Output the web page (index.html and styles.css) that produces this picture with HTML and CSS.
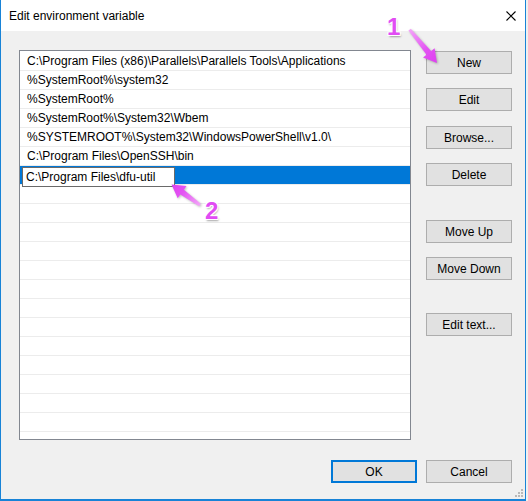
FILE: index.html
```html
<!DOCTYPE html>
<html lang="en">
<head>
    <meta charset="UTF-8">
    <title>Edit environment variable</title>
    <link rel="stylesheet" href="styles.css">
</head>
<body>
    <div class="window">
        <div class="titlebar">
            <span class="title">Edit environment variable</span>
            <svg class="close" width="10" height="10" viewBox="0 0 10 10">
                <path d="M0.5 0.5 L9.5 9.5 M9.5 0.5 L0.5 9.5" stroke="#000" stroke-width="1.1" fill="none"/>
            </svg>
        </div>

        <div class="content">
            <div class="main">
                <div class="list">
                    <div class="row">C:\Program Files (x86)\Parallels\Parallels Tools\Applications</div>
                    <div class="row">%SystemRoot%\system32</div>
                    <div class="row">%SystemRoot%</div>
                    <div class="row">%SystemRoot%\System32\Wbem</div>
                    <div class="row">%SYSTEMROOT%\System32\WindowsPowerShell\v1.0\</div>
                    <div class="row">C:\Program Files\OpenSSH\bin</div>
                    <div class="row selected"><span class="edit-box">C:\Program Files\dfu-util</span></div>
                    <div class="row"></div>
                    <div class="row"></div>
                    <div class="row"></div>
                    <div class="row"></div>
                    <div class="row"></div>
                    <div class="row"></div>
                    <div class="row"></div>
                    <div class="row"></div>
                    <div class="row"></div>
                    <div class="row"></div>
                    <div class="row"></div>
                    <div class="row"></div>
                    <div class="row"></div>
                    <div class="row"></div>
                </div>

                <div class="side-buttons">
                    <button class="btn">New</button>
                    <button class="btn">Edit</button>
                    <button class="btn">Browse...</button>
                    <button class="btn">Delete</button>
                    <button class="btn group-start">Move Up</button>
                    <button class="btn">Move Down</button>
                    <button class="btn group-start">Edit text...</button>
                </div>
            </div>

            <div class="footer">
                <button class="btn default">OK</button>
                <button class="btn">Cancel</button>
            </div>
        </div>

        <!-- resize grip -->
        <svg class="grip" width="9" height="9" viewBox="0 0 9 9">
            <g fill="#b9b9b9">
                <rect x="6" y="0" width="2" height="2"/>
                <rect x="3" y="3" width="2" height="2"/>
                <rect x="6" y="3" width="2" height="2"/>
                <rect x="0" y="6" width="2" height="2"/>
                <rect x="3" y="6" width="2" height="2"/>
                <rect x="6" y="6" width="2" height="2"/>
            </g>
        </svg>

        <!-- annotation arrows -->
        <svg class="annotations" width="526" height="501" viewBox="0 0 526 501">
            <defs>
                <linearGradient id="arrow1" x1="409" y1="30" x2="437" y2="63" gradientUnits="userSpaceOnUse">
                    <stop offset="0" stop-color="#f3a6f8"/>
                    <stop offset="0.6" stop-color="#e352f3"/>
                    <stop offset="1" stop-color="#de3ff0"/>
                </linearGradient>
                <linearGradient id="arrow2" x1="200" y1="205" x2="171" y2="184" gradientUnits="userSpaceOnUse">
                    <stop offset="0" stop-color="#f3a6f8"/>
                    <stop offset="0.6" stop-color="#e352f3"/>
                    <stop offset="1" stop-color="#de3ff0"/>
                </linearGradient>
            </defs>
            <polygon fill="url(#arrow1)" points="408.4,30.6 426.5,54.8 423,57.6 437,63 434.6,48.2 431.1,51 410.8,28.7"/>
            <polygon fill="url(#arrow2)" points="200.9,203.8 183.9,189.7 186.5,186 171.5,184.5 177.7,198.2 180.3,194.5 199.1,206.2"/>
        </svg>
        <span class="marker marker-1">1</span>
        <span class="marker marker-2">2</span>
    </div>
</body>
</html>
```

FILE: styles.css
```css
* {
    box-sizing: border-box;
    margin: 0;
    padding: 0;
}

body {
    font-family: "Segoe UI", "Liberation Sans", Arial, sans-serif;
    font-size: 12px;
    background-color: #f0f0f0;
    color: #000;
}

.window {
    position: relative;
    width: 526px;
    height: 501px;
    background-color: #f0f0f0;
    border: 1px solid #1883d7;
    border-top: none;
    border-bottom-width: 2px;
    display: flex;
    flex-direction: column;
}

.titlebar {
    height: 31px;
    background-color: #fff;
    display: flex;
    align-items: center;
    justify-content: space-between;
    padding: 0 9px 0 8px;
}

.title {
    font-size: 12px;
    line-height: 16px;
    padding-top: 1px;
}

.close {
    display: block;
}

.content {
    padding: 19px 13px 0 18px;
}

.main {
    display: flex;
    gap: 15px;
}

.list {
    width: 392px;
    height: 390px;
    background-color: #fff;
    border: 1px solid #828790;
    padding-top: 1px;
    overflow: hidden;
}

.row {
    height: 19px;
    line-height: 18px;
    border-bottom: 1px solid #ececec;
    padding-left: 7px;
    white-space: nowrap;
}

.row.selected {
    background-color: #0078d7;
    padding-left: 2px;
    display: flex;
    align-items: flex-start;
}

.edit-box {
    display: block;
    width: 153px;
    height: 20px;
    margin-top: 1px;
    margin-bottom: -3px;
    background-color: #fff;
    border: 1px solid #6a6a6a;
    padding-left: 3px;
    line-height: 18px;
}

.side-buttons {
    display: flex;
    flex-direction: column;
    gap: 14px;
    padding-top: 1px;
}

.btn {
    width: 86px;
    height: 23px;
    background-color: #e1e1e1;
    border: 1px solid #adadad;
    font-family: inherit;
    font-size: 12px;
    color: #000;
    line-height: 20px;
}

.side-buttons .btn:nth-child(3) {
    margin-top: 1px;
}

.side-buttons .btn.group-start {
    margin-top: 20px;
}

.side-buttons .btn:last-child {
    margin-top: 19px;
}

.btn.default {
    border: 2px solid #0078d7;
}

.footer {
    display: flex;
    justify-content: flex-end;
    gap: 9px;
    margin-top: 20px;
}

.grip {
    position: absolute;
    right: 1px;
    bottom: 1px;
}

.annotations {
    position: absolute;
    top: 0;
    left: -1px;
    pointer-events: none;
    filter: drop-shadow(1px 1px 1px rgba(0, 0, 0, 0.25));
}

.marker {
    position: absolute;
    font-family: "Liberation Sans", Arial, sans-serif;
    font-weight: bold;
    font-size: 24px;
    line-height: 24px;
    color: #e14cf3;
    text-shadow: -1px -1px 0 #fff, 1px -1px 0 #fff, -1px 1px 0 #fff, 1px 1px 0 #fff,
        1px 2px 2px rgba(0, 0, 0, 0.35);
}

.marker-1 {
    left: 386px;
    top: 15px;
}

.marker-2 {
    left: 204px;
    top: 199px;
}
```
